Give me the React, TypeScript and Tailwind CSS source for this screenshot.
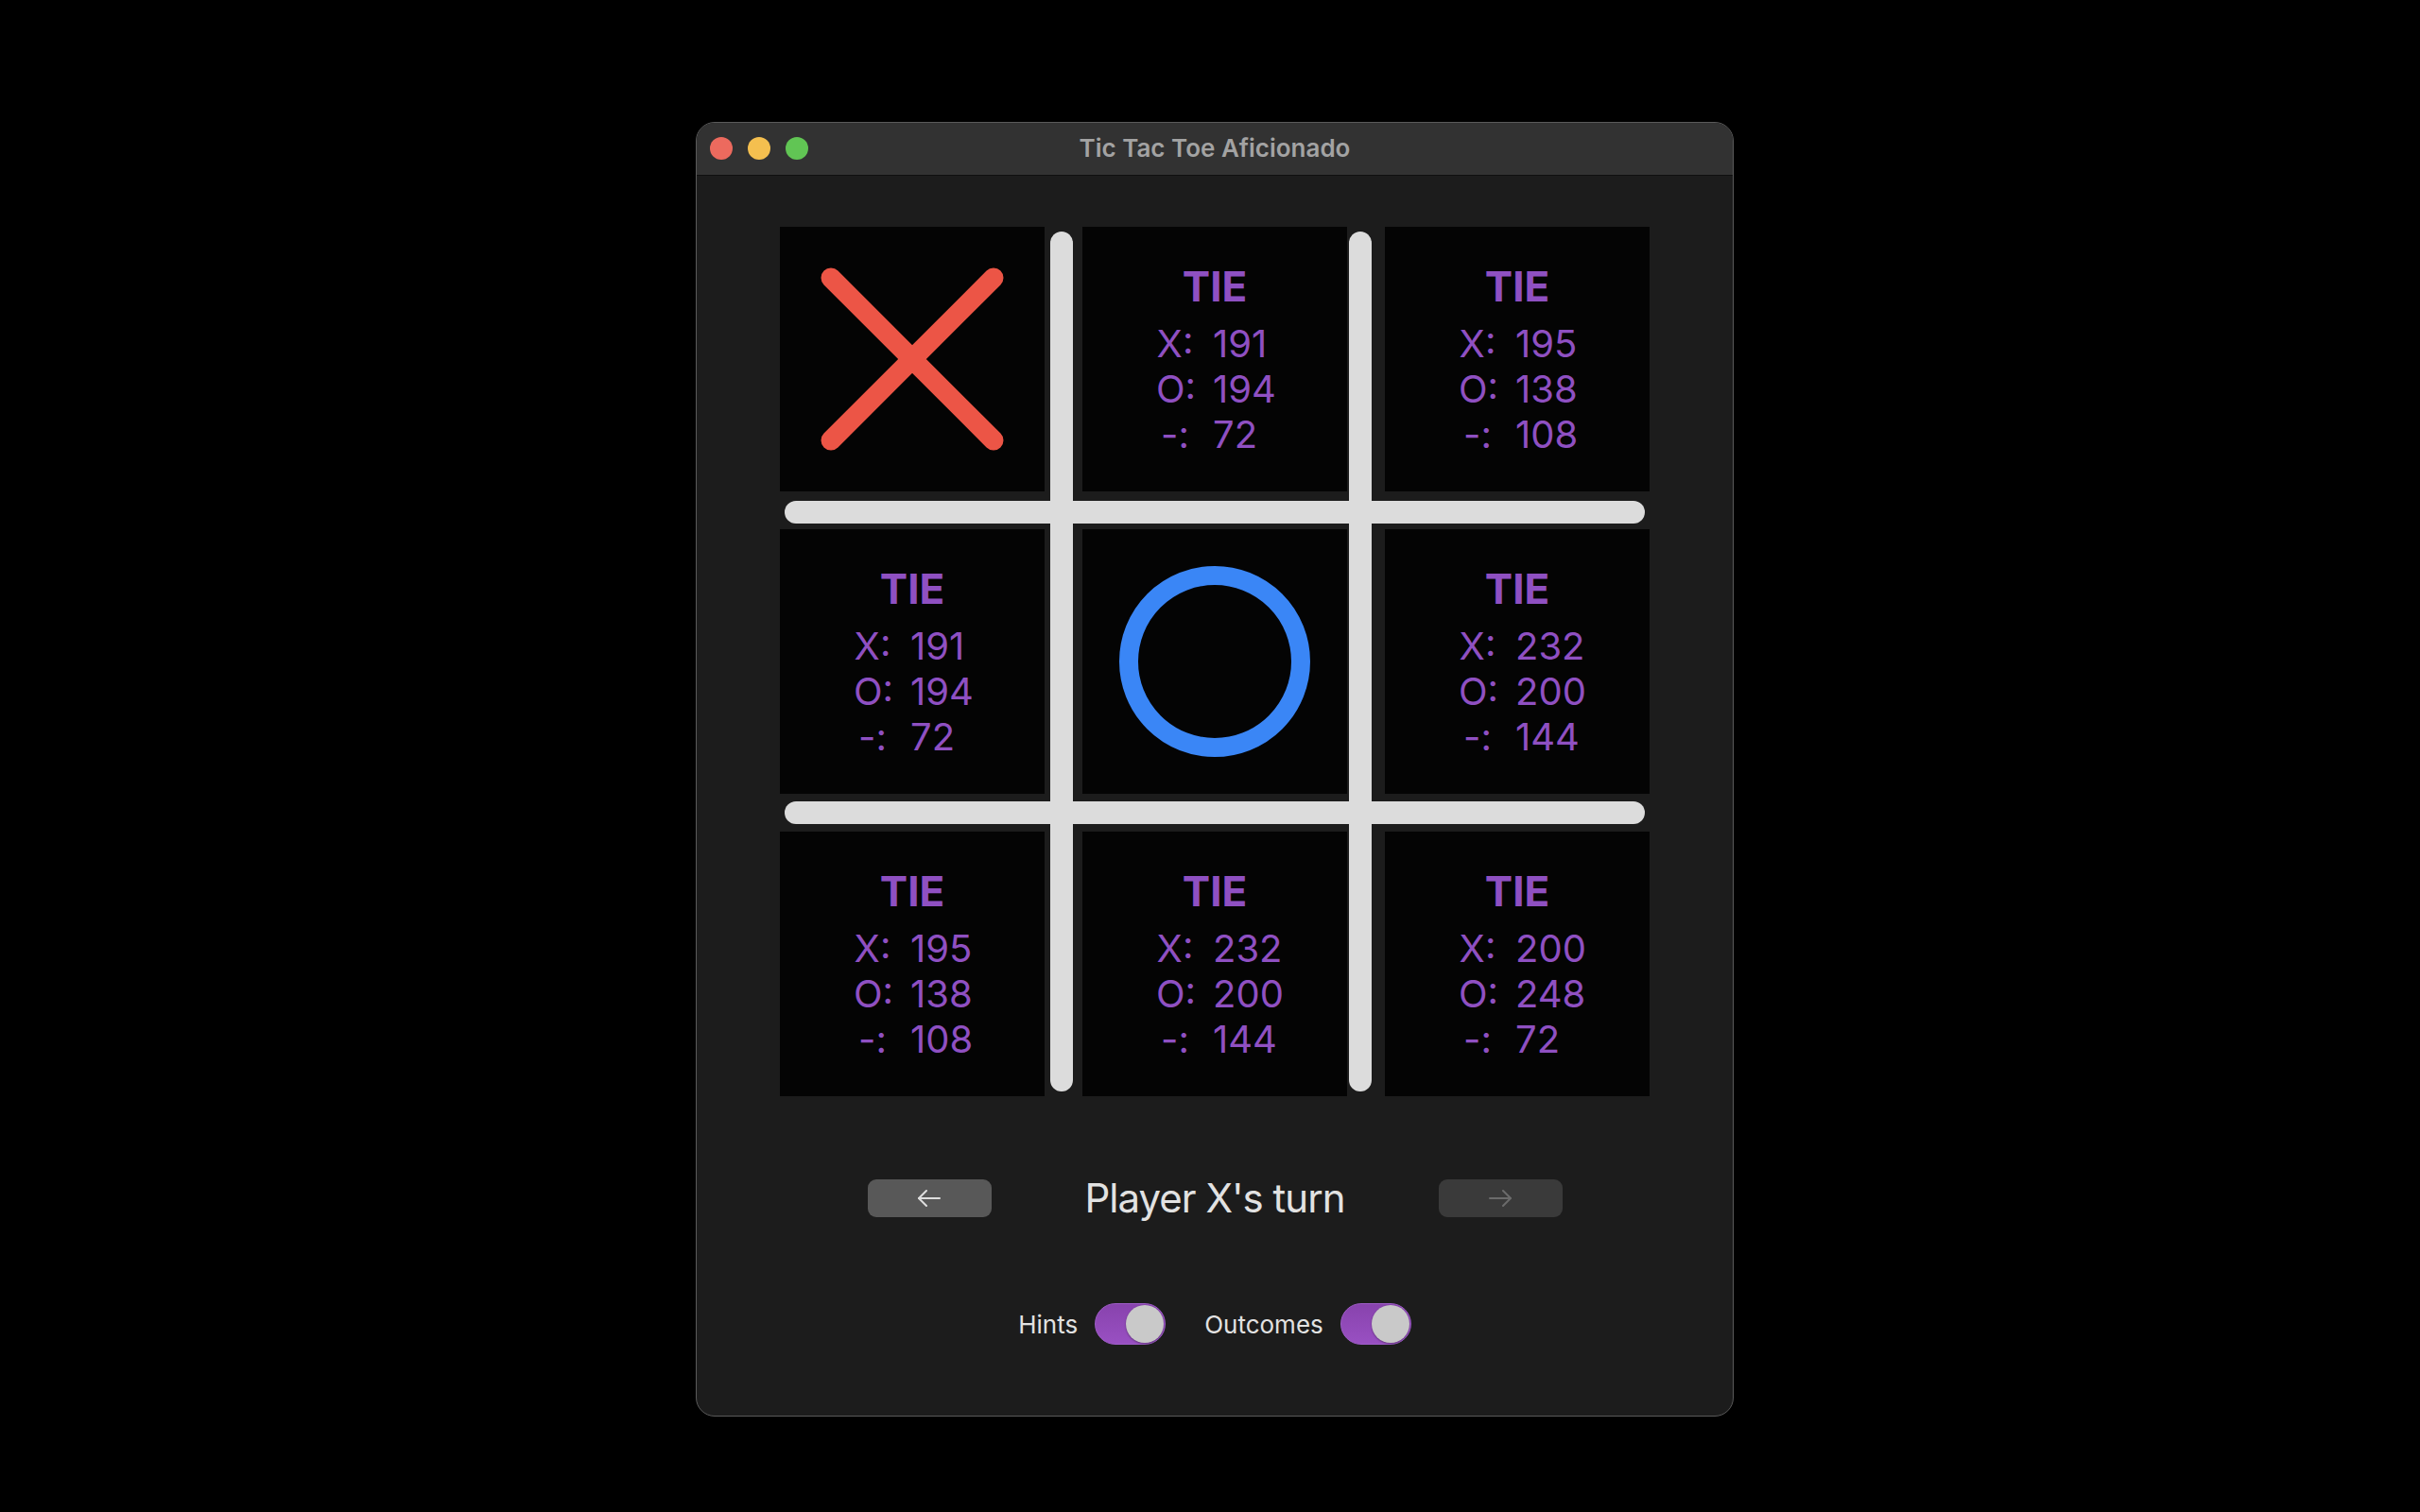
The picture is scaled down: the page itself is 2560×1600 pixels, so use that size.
import React from "react";

type Cell =
  | { kind: "x" }
  | { kind: "o" }
  | { kind: "stats"; x: number; o: number; d: number };

const stats = (x: number, o: number, d: number): Cell => ({ kind: "stats", x, o, d });

const cells: Cell[] = [
  { kind: "x" },
  stats(191, 194, 72),
  stats(195, 138, 108),
  stats(191, 194, 72),
  { kind: "o" },
  stats(232, 200, 144),
  stats(195, 138, 108),
  stats(232, 200, 144),
  stats(200, 248, 72),
];

function Arrow({ dir, color }: { dir: "left" | "right"; color: string }) {
  return (
    <svg width="26" height="20" viewBox="0 0 26 20" fill="none" stroke={color} strokeWidth="2" strokeLinecap="round" strokeLinejoin="round">
      {dir === "left" ? (
        <>
          <path d="M24 10H2" />
          <path d="M10 2L2 10L10 18" />
        </>
      ) : (
        <>
          <path d="M2 10H24" />
          <path d="M16 2L24 10L16 18" />
        </>
      )}
    </svg>
  );
}

function Square({ cell }: { cell: Cell }) {
  if (cell.kind === "x") {
    return (
      <div className="h-[280px] w-[280px] bg-[#040404]">
        <svg width="280" height="280" viewBox="0 0 280 280">
          <path d="M54 54L226 226M226 54L54 226" stroke="#ec5546" strokeWidth="21" strokeLinecap="round" />
        </svg>
      </div>
    );
  }
  if (cell.kind === "o") {
    return (
      <div className="h-[280px] w-[280px] bg-[#040404]">
        <svg width="280" height="280" viewBox="0 0 280 280">
          <circle cx="140" cy="140" r="91" fill="none" stroke="#3a86f6" strokeWidth="20" />
        </svg>
      </div>
    );
  }
  const rows: [string, number][] = [
    ["X:", cell.x],
    ["O:", cell.o],
    ["-:", cell.d],
  ];
  return (
    <div className="flex h-[280px] w-[280px] flex-col items-center justify-center bg-[#040404] text-[#8f50c2]">
      <div className="text-[44px] font-bold leading-[52px]">TIE</div>
      <div className="mt-[11px] grid grid-cols-[40px_64px] gap-x-[20px] text-[40px] leading-[48px]">
        {rows.map(([label, n]) => (
          <React.Fragment key={label}>
            <span className="text-center">{label}</span>
            <span className="whitespace-nowrap text-left">{n}</span>
          </React.Fragment>
        ))}
      </div>
    </div>
  );
}

function Toggle() {
  return (
    <div className="flex h-[44px] w-[75px] items-center justify-end rounded-full border border-[#9d5cc6] bg-gradient-to-b from-[#8843ad] to-[#9950c2] p-[1px]">
      <div className="h-[40px] w-[40px] rounded-full bg-[#c9c9c9] shadow-[0_1px_2px_rgba(0,0,0,0.35)]" />
    </div>
  );
}

export default function App() {
  return (
    <div className="h-[1600px] w-full bg-black pl-[736px] pt-[129px] font-[Inter,sans-serif]">
      <div className="h-[1370px] w-[1098px] overflow-hidden rounded-[20px] border border-[#5a5a5a] bg-[#1c1c1c]">
        {/* title bar */}
        <div className="grid h-[56px] grid-cols-[1fr_auto_1fr] items-center border-b border-[#0f0f0f] bg-[#323232] pb-[2px]">
          <div className="flex items-center gap-[16px] pl-[14px] pt-[1px]">
            <span className="h-[24px] w-[24px] rounded-full bg-[#ec6a5e]" />
            <span className="h-[24px] w-[24px] rounded-full bg-[#f4bf4f]" />
            <span className="h-[24px] w-[24px] rounded-full bg-[#61c554]" />
          </div>
          <div className="text-[26px] font-semibold text-[#a3a3a3]">Tic Tac Toe Aficionado</div>
          <div />
        </div>

        {/* board */}
        <div className="relative mx-auto mt-[54px] h-[920px] w-[920px]">
          <div className="absolute left-[286px] top-[5px] h-[910px] w-[24px] rounded-full bg-[#dcdcdc]" />
          <div className="absolute left-[602px] top-[5px] h-[910px] w-[24px] rounded-full bg-[#dcdcdc]" />
          <div className="absolute left-[5px] top-[290px] h-[24px] w-[910px] rounded-full bg-[#dcdcdc]" />
          <div className="absolute left-[5px] top-[608px] h-[24px] w-[910px] rounded-full bg-[#dcdcdc]" />
          <div className="relative grid grid-cols-[280px_280px_280px] gap-[40px]">
            {cells.map((c, i) => (
              <Square key={i} cell={c} />
            ))}
          </div>
        </div>

        {/* turn row */}
        <div className="mx-auto mt-[88px] grid w-[735px] grid-cols-[131px_1fr_131px] items-center">
          <button className="flex h-[40px] items-center justify-center rounded-[9px] bg-[#585858]">
            <Arrow dir="left" color="#dedede" />
          </button>
          <div className="text-center text-[42px] leading-[40px] tracking-[-1px] text-[#e2e2e2]">Player X's turn</div>
          <button className="flex h-[40px] items-center justify-center rounded-[9px] bg-[#3a3a3a]">
            <Arrow dir="right" color="#6b6b6b" />
          </button>
        </div>

        {/* toggles */}
        <div className="mt-[91px] flex items-center justify-center gap-[41px] text-[26px] text-[#e2e2e2]">
          <div className="flex items-center gap-[18px]">
            <span>Hints</span>
            <Toggle />
          </div>
          <div className="flex items-center gap-[18px]">
            <span>Outcomes</span>
            <Toggle />
          </div>
        </div>
      </div>
    </div>
  );
}
